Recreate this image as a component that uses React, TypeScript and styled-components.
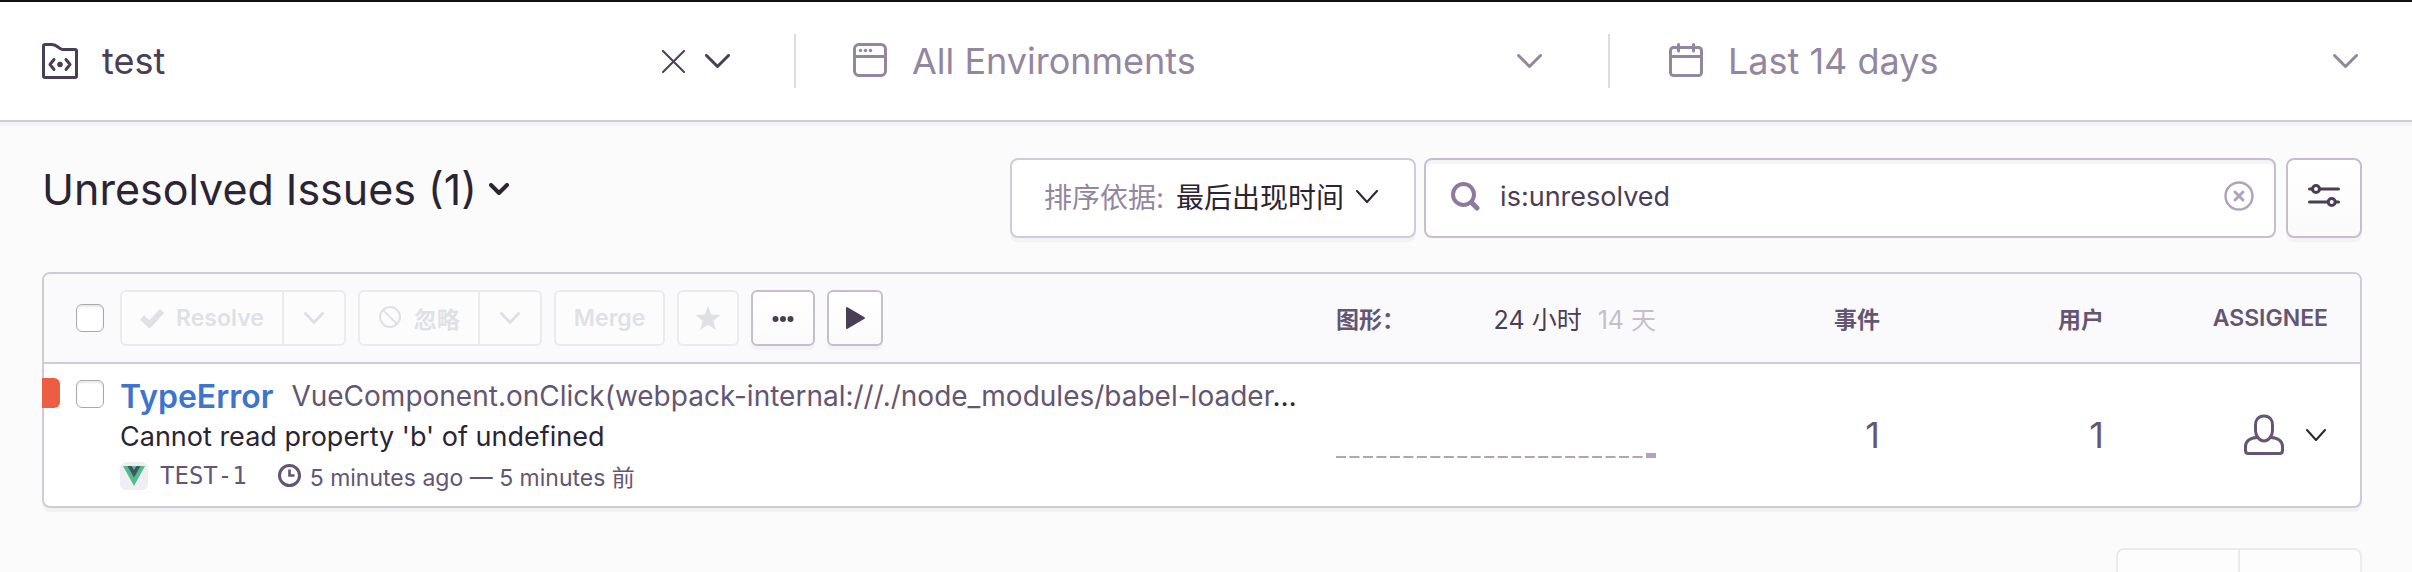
import React from 'react';
import styled, { createGlobalStyle, css } from 'styled-components';

const color = {
  ink: '#2b2433',
  text: '#4a3e56',
  subtle: '#645574',
  muted: '#9386a0',
  border: '#d1cad8',
  control: '#c6becf',
  disabled: '#dfe1e6',
  disabledBorder: '#ebebee',
  link: '#3d74cc',
  error: '#ec5e44',
  page: '#fbfbfc',
};

const GlobalStyle = createGlobalStyle`
  *, *::before, *::after { box-sizing: border-box; }
  body {
    margin: 0;
    background: ${color.page};
    color: ${color.ink};
    font-family: Inter, 'Noto Sans CJK SC', sans-serif;
    font-size: 28px;
  }
  button, input { font: inherit; }
  svg { display: block; flex: none; }
`;

const Shell = styled.div`
  height: 100vh;
  overflow-y: auto;
  scrollbar-width: none;
`;

const plainButton = css`
  display: flex;
  align-items: center;
  padding: 0;
  border: 0;
  background: none;
  color: inherit;
  cursor: pointer;
`;

/* Global selection header */

const Header = styled.header`
  display: grid;
  grid-template-columns: 398fr 407fr 401fr;
  align-items: center;
  height: 122px;
  border-top: 2px solid #120d1a;
  border-bottom: 2px solid ${color.border};
  background: #fff;
  box-shadow: 0 4px 0 #f3f2f5;
`;

const Selector = styled.div<{ $active?: boolean }>`
  display: flex;
  align-items: center;
  gap: 20px;
  height: 54px;
  padding: 0 66px 0 56px;
  border-right: 2px solid #dedae4;
  color: ${(p) => (p.$active ? color.text : color.muted)};

  &:first-child { padding: 0 64px 0 42px; }
  &:last-child { padding: 0 54px 0 58px; border-right: 0; }
`;

const SelectorButton = styled.button`
  ${plainButton}
  flex: 1;
  gap: 24px;
  font-size: 36px;
  line-height: 54px;
`;

const IconButton = styled.button`
  ${plainButton}
`;

/* Page heading and search */

const Main = styled.main`
  padding: 36px 50px 0 42px;
`;

const Toolbar = styled.div`
  display: flex;
  align-items: flex-start;
  justify-content: space-between;
`;

const Title = styled.h1`
  margin: 0;
  font-size: 43px;
  font-weight: 400;
  line-height: 62px;
`;

const TitleButton = styled.button`
  ${plainButton}
  gap: 12px;
`;

const Controls = styled.div`
  display: flex;
  width: 1352px;
`;

const SortButton = styled.button`
  ${plainButton}
  gap: 12px;
  height: 80px;
  margin-right: 8px;
  padding: 0 36px 4px 32px;
  border: 2px solid ${color.border};
  border-radius: 8px;
  background: #fff;
  box-shadow: 0 4px 0 #f3f2f5;
  white-space: nowrap;
`;

const SortLabel = styled.span`
  color: ${color.muted};
`;

const SearchBox = styled.form`
  display: flex;
  flex: 1;
  align-items: center;
  gap: 20px;
  height: 80px;
  margin-right: 10px;
  padding: 0 20px 4px 24px;
  border: 2px solid ${color.control};
  border-radius: 8px;
  background: #fff;
  box-shadow: inset 0 4px 0 #f5f4f7;
  color: #8d7a9f;
`;

const SearchInput = styled.input`
  flex: 1;
  min-width: 0;
  padding: 0;
  border: 0;
  outline: 0;
  background: none;
  color: ${color.text};
  font-size: 27px;
`;

const ClearButton = styled.button`
  ${plainButton}
  color: #b0a4bc;
`;

const FilterButton = styled.button`
  ${plainButton}
  justify-content: center;
  width: 76px;
  height: 80px;
  padding-bottom: 4px;
  border: 2px solid ${color.control};
  border-radius: 8px;
  background: linear-gradient(#fff, #fafafb);
  box-shadow: 0 4px 0 #f3f2f4;
  color: ${color.text};
`;

/* Issue panel */

const Panel = styled.section`
  margin-top: 34px;
  border: 2px solid ${color.border};
  border-radius: 8px;
  background: #fff;
  box-shadow: 0 4px 0 #f2f1f4;
`;

const Table = styled.table`
  width: 100%;
  border-collapse: separate;
  border-spacing: 0;
  table-layout: fixed;
`;

const Col = styled.col<{ $width?: number }>`
  width: ${(p) => (p.$width ? `${p.$width}px` : 'auto')};
`;

const HeadCell = styled.th<{ $align?: 'left' | 'right' }>`
  height: 90px;
  padding: 0;
  border-bottom: 2px solid ${color.border};
  background: #fafafc;
  color: ${color.subtle};
  font-size: 23px;
  font-weight: 600;
  text-align: ${(p) => p.$align ?? 'left'};
  text-transform: uppercase;

  &:first-child { border-top-left-radius: 6px; }
  &:last-child { border-top-right-radius: 6px; }
`;

const Actions = styled.div`
  display: flex;
  gap: 12px;
`;

const ButtonGroup = styled.div`
  display: flex;
`;

const ActionButton = styled.button<{ $compact?: boolean }>`
  display: flex;
  align-items: center;
  gap: 12px;
  height: 56px;
  padding: 0 ${(p) => (p.$compact ? 16 : 18)}px;
  border: 2px solid ${color.control};
  border-radius: 6px;
  background: linear-gradient(#fff, #fbfbfc);
  box-shadow: 0 4px 0 #f2f1f5;
  color: ${color.text};
  font-size: 23px;
  font-weight: 600;

  &:disabled {
    border-color: ${color.disabledBorder};
    background: #fcfcfd;
    box-shadow: none;
    color: ${color.disabled};
  }

  ${ButtonGroup} &:first-child { border-radius: 6px 0 0 6px; }
  ${ButtonGroup} &:last-child {
    padding: 0 20px;
    border-left: 0;
    border-radius: 0 6px 6px 0;
  }
`;

const CheckCell = styled.div`
  display: flex;
  padding-left: 32px;
`;

const Checkbox = styled.input`
  appearance: none;
  width: 28px;
  height: 28px;
  margin: 0;
  border: 1px solid #a9a8ac;
  border-radius: 6px;
  background: #fff;
  box-shadow: inset 0 2px 2px #e9e9eb;

  &:checked { background: ${color.link}; }
`;

const GraphHead = styled.div`
  display: flex;
  align-items: center;
  justify-content: space-between;
`;

const Periods = styled.div`
  display: flex;
  gap: 16px;
`;

const Period = styled.button<{ $selected?: boolean }>`
  ${plainButton}
  color: ${(p) => (p.$selected ? color.text : '#c6becf')};
  font-size: 25px;
  font-weight: 400;
`;

const Cell = styled.td<{ $top?: number; $align?: 'left' | 'right' }>`
  position: relative;
  height: 142px;
  padding: ${(p) => p.$top ?? 0}px 0 0;
  vertical-align: ${(p) => (p.$top ? 'top' : 'middle')};
  text-align: ${(p) => p.$align ?? 'left'};
`;

const Level = styled.span`
  position: absolute;
  top: 14px;
  left: -2px;
  width: 18px;
  height: 30px;
  border-radius: 0 6px 6px 0;
  background: ${color.error};
`;

const IssueLine = styled.div`
  display: flex;
  align-items: center;
  height: 40px;
  font-size: 27px;
  white-space: nowrap;
`;

const IssueTitle = styled.a`
  margin-right: 18px;
  color: ${color.link};
  font-size: 32px;
  font-weight: 600;
  text-decoration: none;
`;

const Culprit = styled.span`
  font-size: 28px;
  line-height: 40px;
`;

const CulpritPath = styled.span`
  color: ${color.subtle};
`;

const MetaLine = styled(IssueLine)`
  color: ${color.subtle};
  font-size: 23px;
`;

const Platform = styled.span`
  display: flex;
  align-items: center;
  justify-content: center;
  width: 28px;
  height: 28px;
  margin-right: 12px;
  border-radius: 6px;
  background: #f0eef4;
`;

const ShortId = styled.span`
  margin-right: 30px;
  font-family: 'DejaVu Sans Mono', monospace;
  font-size: 24px;
`;

const Seen = styled.span`
  display: flex;
  align-items: center;
  gap: 8px;
`;

const Count = styled.a`
  color: ${color.subtle};
  font-size: 36px;
  text-decoration: none;
`;

const AssigneeButton = styled.button`
  ${plainButton}
  gap: 22px;
  margin-left: auto;
  padding-right: 2px;
`;

const Pagination = styled.nav`
  display: flex;
  justify-content: flex-end;
  margin-top: 40px;
`;

const PageButton = styled.button`
  display: flex;
  align-items: center;
  justify-content: center;
  width: 122px;
  height: 68px;
  padding: 0;
  border: 2px solid ${color.disabledBorder};
  border-left: 0;
  border-radius: 0 8px 8px 0;
  background: #fdfdfe;
  color: ${color.disabled};

  &:first-child {
    width: 124px;
    border-left: 2px solid ${color.disabledBorder};
    border-radius: 8px 0 0 8px;
  }
`;

/* Icons */

type ChevronProps = { width: number; height: number; stroke?: number; ink?: string };

const Chevron = ({ width, height, stroke = 2, ink = 'currentColor' }: ChevronProps) => (
  <svg width={width} height={height} fill="none" stroke={ink} strokeWidth={stroke} strokeLinecap="round" strokeLinejoin="round">
    <path d={`M${stroke / 2} ${stroke / 2}L${width / 2} ${height - stroke / 2}L${width - stroke / 2} ${stroke / 2}`} />
  </svg>
);

const PageArrow = ({ flip }: { flip?: boolean }) => (
  <svg width="12" height="18" fill="none" stroke="currentColor" strokeWidth="3" strokeLinecap="round" strokeLinejoin="round">
    <path d={flip ? 'M2 2L10 9L2 16' : 'M10 2L2 9L10 16'} />
  </svg>
);

const ProjectIcon = () => (
  <svg width="36" height="36" fill="none" stroke="currentColor" strokeWidth="3" strokeLinecap="round" strokeLinejoin="round">
    <path d="M1.5 3V33Q1.5 34.500 3 34.500H33Q34.500 34.500 34.500 33V8Q34.500 6.500 33 6.500H20.500C17 6.500 15.500 1.500 10 1.500H3Q1.500 1.500 1.500 3Z" />
    <path d="M12 16.500L8 21.500L12 26.500M24 16.500L28 21.500L24 26.500" />
    <circle cx="18" cy="21.500" r="2.800" fill="currentColor" stroke="none" />
  </svg>
);

const WindowIcon = () => (
  <svg width="36" height="36" fill="none" stroke="currentColor" strokeWidth="3">
    <rect x="2.500" y="1.500" width="31" height="31" rx="4.500" />
    <path d="M2 13.500H34" />
    <g fill="currentColor" stroke="none">
      <circle cx="8.500" cy="7.500" r="1.700" />
      <circle cx="13.500" cy="7.500" r="1.700" />
      <circle cx="18.500" cy="7.500" r="1.700" />
    </g>
  </svg>
);

const CalendarIcon = () => (
  <svg width="36" height="36" fill="none" stroke="currentColor" strokeWidth="3" strokeLinecap="round">
    <rect x="2.500" y="4.500" width="31" height="28" rx="3" />
    <path d="M2.500 13.500H33.500M10.500 1.500V8M25.500 1.500V8" />
  </svg>
);

const CrossIcon = () => (
  <svg width="23" height="23" fill="none" stroke="currentColor" strokeWidth="2" strokeLinecap="round">
    <path d="M1 1L22 22M22 1L1 22" />
  </svg>
);

const SearchIcon = () => (
  <svg width="30" height="30" fill="none" stroke="currentColor" strokeWidth="4" strokeLinecap="round">
    <circle cx="13.500" cy="13.500" r="10.500" />
    <path d="M21.500 21.500L27 27" strokeWidth="5" />
  </svg>
);

const ClearIcon = () => (
  <svg width="30" height="30" fill="none" stroke="currentColor" strokeWidth="2.400" strokeLinecap="round">
    <circle cx="15" cy="15" r="13.500" />
    <path d="M11 11L19 19M19 11L11 19" strokeWidth="3" />
  </svg>
);

const SlidersIcon = () => (
  <svg width="32" height="26" fill="none" stroke="currentColor" strokeWidth="3" strokeLinecap="round">
    <path d="M1.500 6H4M12 6H30.500M1.500 19H19.500M28 19H30.500" />
    <circle cx="8" cy="6" r="3.500" />
    <circle cx="23.700" cy="19" r="3.500" />
  </svg>
);

const CheckIcon = () => (
  <svg width="24" height="20" fill="none" stroke="currentColor" strokeWidth="6">
    <path d="M2 9.500L9.500 16.500L22 3" />
  </svg>
);

const BanIcon = () => (
  <svg width="24" height="24" fill="none" stroke="currentColor" strokeWidth="2">
    <circle cx="12" cy="11" r="10" />
    <path d="M5 4L19 18" />
  </svg>
);

const StarIcon = () => (
  <svg width="26" height="26" viewBox="0 0 26 26" fill="currentColor">
    <path d="M13 1L16.200 9.600L25.500 10L18.300 15.700L20.800 25L13 19.700L5.200 25L7.700 15.700L.5 10L9.800 9.600Z" />
  </svg>
);

const DotsIcon = () => (
  <svg width="24" height="8" fill="currentColor">
    <circle cx="4.500" cy="5" r="3" />
    <circle cx="12" cy="5" r="3" />
    <circle cx="19.500" cy="5" r="3" />
  </svg>
);

const PlayIcon = () => (
  <svg width="20" height="24" fill="currentColor" stroke="currentColor" strokeWidth="2" strokeLinejoin="round">
    <path d="M2 2V22L19 12Z" />
  </svg>
);

const VueIcon = () => (
  <svg width="24" height="20" viewBox="0 0 24 20">
    <path d="M1 0H23L12 20Z" fill="#53bd88" />
    <path d="M5.500 0H9.500L12 4L14.500 0H18.500L12 11.500Z" fill="#3f5468" />
  </svg>
);

const ClockIcon = () => (
  <svg width="25" height="25" fill="none" stroke="currentColor" strokeWidth="3">
    <circle cx="12.500" cy="11.500" r="10" />
    <path d="M12.500 5.500V11.500H17.500" strokeWidth="2.600" />
  </svg>
);

const UserIcon = () => (
  <svg width="40" height="46" fill="none" stroke={color.subtle} strokeWidth="3" strokeLinejoin="round">
    <path d="M20 4C14.500 4 11.500 7.500 11.500 13V18.500C11.500 24 15.500 29 20 29S28.500 24 28.500 18.500V13C28.500 7.500 25.500 4 20 4Z" />
    <path d="M13 25.500C5 26 1.500 29 1.500 35V38.500Q1.500 41.500 4.500 41.500H35.500Q38.500 41.500 38.500 38.500V35C38.500 29 35 26 27 25.500" />
  </svg>
);

const hourly = Array.from({ length: 24 }, (_, hour) => (hour === 23 ? 5 : 2));

const Graph = () => (
  <svg width="320" height="46" fill="#b0a4bc" role="img" aria-label="24 小时">
    {hourly.map((value, hour) => (
      <rect key={hour} x={hour * 13.478} y={46 - value} width="10" height={value} />
    ))}
  </svg>
);

export default function App() {
  return (
    <Shell>
      <GlobalStyle />
      <Header>
        <Selector $active>
          <SelectorButton><ProjectIcon />test</SelectorButton>
          <IconButton aria-label="Clear project"><CrossIcon /></IconButton>
          <IconButton aria-label="Choose project"><Chevron width={25} height={14} stroke={3} /></IconButton>
        </Selector>
        <Selector>
          <SelectorButton><WindowIcon />All Environments</SelectorButton>
          <IconButton aria-label="Choose environment"><Chevron width={25} height={14} stroke={3} /></IconButton>
        </Selector>
        <Selector>
          <SelectorButton><CalendarIcon />Last 14 days</SelectorButton>
          <IconButton aria-label="Choose date range"><Chevron width={25} height={14} stroke={3} /></IconButton>
        </Selector>
      </Header>

      <Main>
        <Toolbar>
          <Title>
            <TitleButton>Unresolved Issues (1)<Chevron width={20} height={12} stroke={4} /></TitleButton>
          </Title>
          <Controls>
            <SortButton>
              <SortLabel>排序依据:</SortLabel>
              最后出现时间
              <Chevron width={22} height={13} />
            </SortButton>
            <SearchBox role="search" onSubmit={(e) => e.preventDefault()}>
              <SearchIcon />
              <SearchInput aria-label="Search issues" defaultValue="is:unresolved" />
              <ClearButton type="button" aria-label="Clear search"><ClearIcon /></ClearButton>
            </SearchBox>
            <FilterButton aria-label="Filters"><SlidersIcon /></FilterButton>
          </Controls>
        </Toolbar>

        <Panel>
          <Table>
            <colgroup>
              <Col $width={76} />
              <Col />
              <Col $width={320} />
              <Col $width={224} />
              <Col $width={224} />
              <Col $width={224} />
              <Col $width={32} />
            </colgroup>
            <thead>
              <tr>
                <HeadCell>
                  <CheckCell><Checkbox type="checkbox" aria-label="Select all issues" /></CheckCell>
                </HeadCell>
                <HeadCell>
                  <Actions>
                    <ButtonGroup>
                      <ActionButton disabled><CheckIcon />Resolve</ActionButton>
                      <ActionButton disabled aria-label="Resolve options"><Chevron width={20} height={12} stroke={3} /></ActionButton>
                    </ButtonGroup>
                    <ButtonGroup>
                      <ActionButton disabled><BanIcon />忽略</ActionButton>
                      <ActionButton disabled aria-label="Ignore options"><Chevron width={20} height={12} stroke={3} /></ActionButton>
                    </ButtonGroup>
                    <ActionButton disabled>Merge</ActionButton>
                    <ActionButton $compact disabled aria-label="Bookmark"><StarIcon /></ActionButton>
                    <ActionButton aria-label="More actions"><DotsIcon /></ActionButton>
                    <ActionButton $compact aria-label="Enable real-time updates"><PlayIcon /></ActionButton>
                  </Actions>
                </HeadCell>
                <HeadCell>
                  <GraphHead>
                    图形：
                    <Periods>
                      <Period $selected>24 小时</Period>
                      <Period>14 天</Period>
                    </Periods>
                  </GraphHead>
                </HeadCell>
                <HeadCell $align="right">事件</HeadCell>
                <HeadCell $align="right">用户</HeadCell>
                <HeadCell $align="right">Assignee</HeadCell>
                <HeadCell />
              </tr>
            </thead>
            <tbody>
              <tr>
                <Cell $top={16}>
                  <Level />
                  <CheckCell><Checkbox type="checkbox" aria-label="Select issue TEST-1" /></CheckCell>
                </Cell>
                <Cell $top={12}>
                  <IssueLine>
                    <IssueTitle href="#issue">TypeError</IssueTitle>
                    <Culprit>
                      <CulpritPath>VueComponent.onClick(webpack-internal:///./node_modules/babel-loader</CulpritPath>…
                    </Culprit>
                  </IssueLine>
                  <IssueLine>Cannot read property 'b' of undefined</IssueLine>
                  <MetaLine>
                    <Platform><VueIcon /></Platform>
                    <ShortId>TEST-1</ShortId>
                    <Seen><ClockIcon />5 minutes ago — 5 minutes 前</Seen>
                  </MetaLine>
                </Cell>
                <Cell><Graph /></Cell>
                <Cell $align="right"><Count href="#events">1</Count></Cell>
                <Cell $align="right"><Count href="#users">1</Count></Cell>
                <Cell>
                  <AssigneeButton aria-label="Assign issue">
                    <UserIcon />
                    <Chevron width={20} height={12} ink={color.ink} />
                  </AssigneeButton>
                </Cell>
                <Cell />
              </tr>
            </tbody>
          </Table>
        </Panel>

        <Pagination aria-label="Pages">
          <PageButton disabled aria-label="Previous page"><PageArrow /></PageButton>
          <PageButton disabled aria-label="Next page"><PageArrow flip /></PageButton>
        </Pagination>
      </Main>
    </Shell>
  );
}
